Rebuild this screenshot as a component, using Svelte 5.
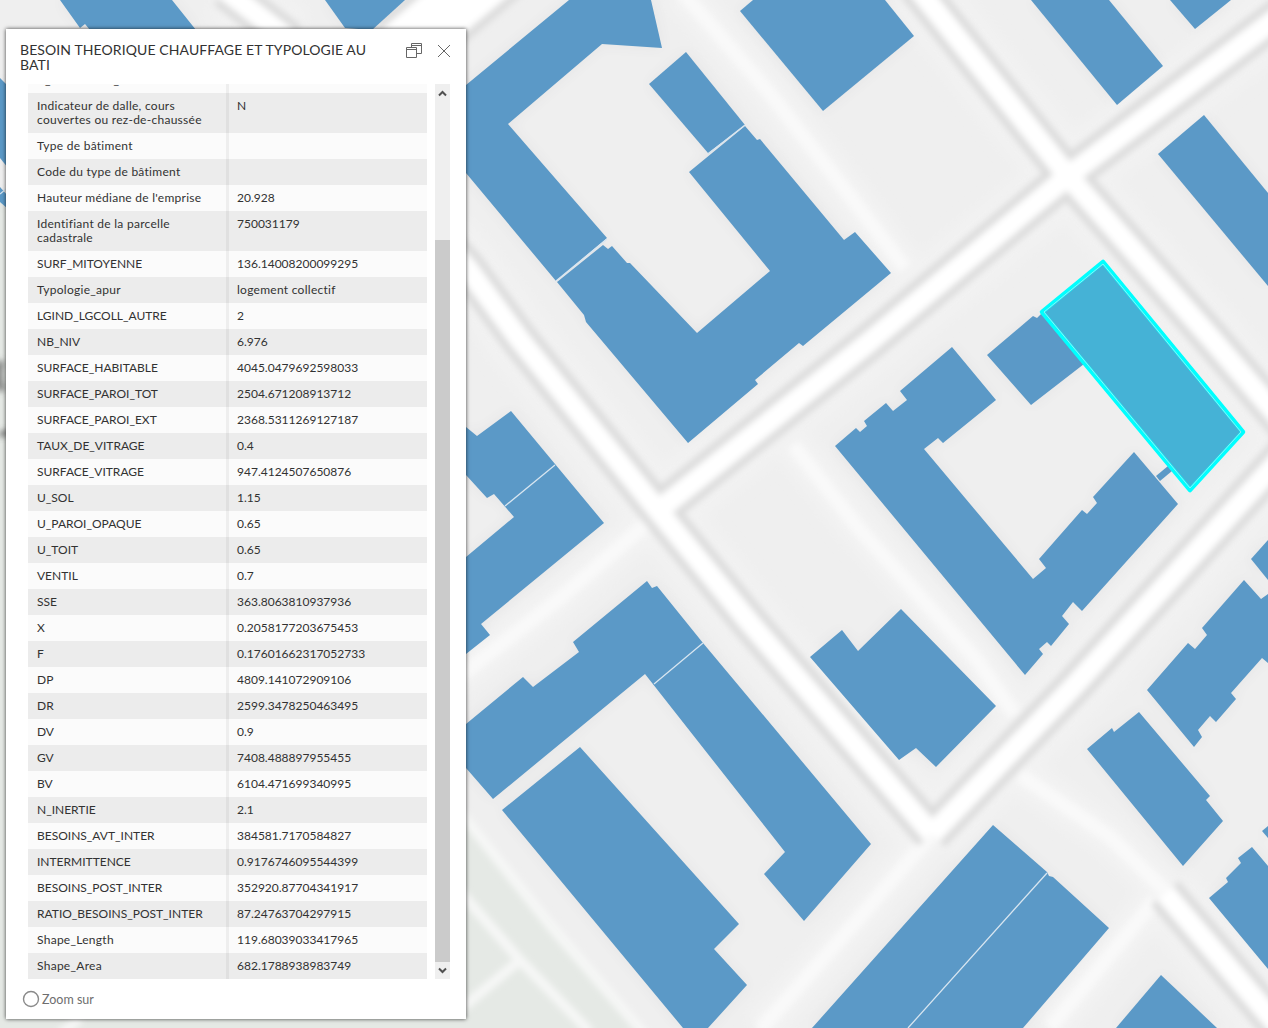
<script>
  const rows = [
    ['C_TOITDALLE_L', ''],
    ['Indicateur de dalle, cours couvertes ou rez-de-chaussée', 'N'],
    ['Type de bâtiment', ''],
    ['Code du type de bâtiment', ''],
    ["Hauteur médiane de l'emprise", '20.928'],
    ['Identifiant de la parcelle cadastrale', '750031179'],
    ['SURF_MITOYENNE', '136.14008200099295'],
    ['Typologie_apur', 'logement collectif'],
    ['LGIND_LGCOLL_AUTRE', '2'],
    ['NB_NIV', '6.976'],
    ['SURFACE_HABITABLE', '4045.0479692598033'],
    ['SURFACE_PAROI_TOT', '2504.671208913712'],
    ['SURFACE_PAROI_EXT', '2368.5311269127187'],
    ['TAUX_DE_VITRAGE', '0.4'],
    ['SURFACE_VITRAGE', '947.4124507650876'],
    ['U_SOL', '1.15'],
    ['U_PAROI_OPAQUE', '0.65'],
    ['U_TOIT', '0.65'],
    ['VENTIL', '0.7'],
    ['SSE', '363.8063810937936'],
    ['X', '0.2058177203675453'],
    ['F', '0.17601662317052733'],
    ['DP', '4809.141072909106'],
    ['DR', '2599.3478250463495'],
    ['DV', '0.9'],
    ['GV', '7408.488897955455'],
    ['BV', '6104.471699340995'],
    ['N_INERTIE', '2.1'],
    ['BESOINS_AVT_INTER', '384581.7170584827'],
    ['INTERMITTENCE', '0.9176746095544399'],
    ['BESOINS_POST_INTER', '352920.87704341917'],
    ['RATIO_BESOINS_POST_INTER', '87.24763704297915'],
    ['Shape_Length', '119.68039033417965'],
    ['Shape_Area', '682.1788938983749']
  ];

  // Mixed-case text is set slightly looser than codes and numbers.
  const isProse = (text) => /[a-z]{2}/.test(text);

  const roads = [
    'M915 -15 L1068 176 L1210 337 L1290 430',
    'M1290 8 L1068 176 L868 343 L660 509',
    'M440 238 L467 268 L520 340 L660 513 L750 623 L857 747 L932 834',
    'M932 834 L1073 687 L1290 448',
    'M1165 893 L1290 1040',
    'M225 -10 L290 40'
  ];

  const lanes = [
    'M1020 775 L1110 837 L1167 893',
    'M932 834 L860 917 L760 1030',
    'M660 512 L560 598 L450 684',
    'M793 445 L860 530 L977 660 L1015 715',
    'M680 -10 L767 90 L853 200 L905 268',
    'M1155 900 L1050 1028'
  ];

  const buildings = [
    '60,0 172,0 196,30 90,30 85,24 80,28',
    '325,0 405,0 372,30 345,28',
    '0,78 8,86 8,168 0,158',
    '0,187 8,196 8,209 0,202',
    '466,85 569,0 651,0 662,48 602,44 508,124 607,238 556,281 466,173',
    '686,52 745,125 708,153 649,84',
    '745,126 757,140 760,139 844,240 855,232 891,273 803,346 799,343 755,380 758,384 688,443 586,322 584,315 557,282 603,245 608,249 612,246 627,263 630,263 697,333 770,271 689,172',
    '740,11 753,0 885,0 914,36 823,111',
    '1031,0 1109,0 1163,66 1117,105',
    '1170,0 1231,0 1195,29',
    '1204,115 1268,193 1268,286 1158,154',
    '987,355 1033,316 1037,318 1042,313 1084,364 1031,405',
    '952,347 996,400 943,443 938,438 924,449 1033,579 1046,568 1039,559 1082,510 1087,514 1097,503 1093,497 1134,452 1178,504 1082,611 1073,602 1062,616 1069,624 1051,646 1047,642 1039,649 1043,654 1025,675 835,446 856,428 860,432 867,426 864,421 886,403 893,411 907,400 900,391',
    '1156,476 1168,466 1172,471 1160,481',
    '901,609 996,706 936,767 916,748 899,760 810,657 842,630 858,651',
    '466,427 477,436 511,411 604,523 481,624 490,635 466,654 466,557 514,517 494,494 487,498 466,475',
    '647,581 652,588 657,586 703,643 871,844 804,921 764,874 785,852 645,674 493,799 466,768 466,724 523,677 533,687 579,652 573,642',
    '580,747 739,924 714,949 747,985 708,1028 683,1028 502,810',
    '993,825 1047,872 1049,876 1053,877 1109,928 1023,1028 812,1028',
    '1161,975 1217,1028 1116,1028',
    '1139,712 1210,796 1206,800 1223,821 1183,866 1087,749 1112,728 1114,732',
    '1244,580 1261,599 1268,594 1268,663 1262,658 1231,693 1236,699 1216,722 1210,716 1198,730 1202,737 1194,747 1147,690 1188,643 1195,649 1207,635 1202,628',
    '1268,540 1251,559 1268,580',
    '1268,826 1262,831 1268,838',
    '1252,847 1268,866 1268,969 1209,898 1228,882 1226,878 1241,863 1238,858'
  ];

  const selected = '1103,262 1243,432 1190,490 1042,312';
</script>

<main>
  <svg class="map" viewBox="0 0 1268 1028" aria-hidden="true">
    <defs>
      <filter id="soft" filterUnits="userSpaceOnUse" x="-50" y="-50" width="1370" height="1130"><feGaussianBlur stdDeviation="3" /></filter>
      <filter id="haze" filterUnits="userSpaceOnUse" x="-50" y="-50" width="1370" height="1130"><feGaussianBlur stdDeviation="7" /></filter>
    </defs>
    <rect width="1268" height="1028" fill="#efefef" />
    <polygon class="park" points="0,200 466,822 640,1028 0,1028" />
    <g filter="url(#haze)" class="shade">
      {#each buildings as b}<polygon points={b} />{/each}
    </g>
    <g filter="url(#haze)">
      {#each roads as d}<path class="verge" {d} />{/each}
      {#each lanes as d}<path class="lane-glow" {d} />{/each}
    </g>
    <g filter="url(#soft)">
      <path class="path" d="M455 806 L550 925 L645 1035 M455 886 L520 960 L590 1032 M520 960 L462 1008 M60 1035 L80 1018" />
      {#each lanes as d}<path class="lane" {d} />{/each}
      {#each roads as d}<path class="casing" {d} />{/each}
      <path class="wide casing" d="M520 -50 L400 50" />
      {#each roads as d}<path class="road" {d} />{/each}
      <path class="wide road" d="M520 -50 L400 50" />
      <path class="mark" d="M1 361 Q-4 376 2 391 M0 435 L8 432" />
    </g>
    {#each buildings as b}<polygon class="building" points={b} />{/each}
    <path class="seam" d="M555 465 L505 506 M703 643 L654 684 M1047 873 L908 1028 M607 239 L556 281 M745 125 L708 154 M0 194 L6 189" />
    <polygon class="selection" points={selected} />
    <polygon class="hairline" points="1103,264 1241,432 1190,488 1044,312" />
  </svg>

  <section class="popup">
    <header>
      <h1>BESOIN THEORIQUE CHAUFFAGE ET TYPOLOGIE AU BATI</h1>
      <button aria-label="Agrandir">
        <svg width="18" height="16" viewBox="0 0 18 16">
          <path d="M5.5 4.5V.5H15.5V10.5H11M5.5 2.5H15.5M.5 4.5H10.5V14.5H.5ZM.5 6.5H10.5" />
        </svg>
      </button>
      <button aria-label="Fermer">
        <svg width="14" height="14" viewBox="0 0 14 14"><path d="M1 1L13 13M13 1L1 13" /></svg>
      </button>
    </header>

    <div class="content">
      <div class="table">
        {#each rows as [label, value]}
          <div class="row">
            <span class="label" class:prose={isProse(label)}>{label}</span>
            <span class="value" class:prose={isProse(value)}>{value}</span>
          </div>
        {/each}
      </div>
      <div class="scrollbar">
        <svg width="15" height="18" viewBox="0 0 15 18"><path d="M4 11.5L7.5 8L11 11.5" /></svg>
        <div class="track"><div class="thumb"></div></div>
        <svg width="15" height="17" viewBox="0 0 15 17"><path d="M4 6.5L7.5 10L11 6.5" /></svg>
      </div>
    </div>

    <footer>
      <svg width="18" height="18" viewBox="0 0 18 18"><circle cx="9" cy="9" r="7.5" /></svg>
      <span>Zoom sur</span>
    </footer>
  </section>
</main>

<style>
  :global(body) { overflow: hidden; }
  main {
    position: relative;
    box-sizing: border-box;
    width: 1268px;
    height: 1028px;
    padding: 29px 0 0 6px;
    overflow: hidden;
    font-family: Lato, sans-serif;
    color: #323232;
  }
  .map { position: absolute; inset: 0; width: 1268px; height: 1028px; }
  .map path { fill: none; }
  .park { fill: #e5e9e5; }
  .shade { opacity: 0.06; fill: #445; }
  .verge { stroke: #f2f2f2; stroke-width: 66; }
  .path { stroke: #f6f7f6; stroke-width: 10; }
  .lane-glow { stroke: #f3f3f3; stroke-width: 36; }
  .lane { stroke: #f9f9f9; stroke-width: 14; }
  .casing { stroke: #dcdcdc; stroke-width: 37; stroke-linejoin: round; }
  .road { stroke: #fff; stroke-width: 21; stroke-linejoin: round; }
  .wide.casing { stroke-width: 72; }
  .wide.road { stroke-width: 56; }
  .mark { stroke: #555; stroke-width: 5; }
  .building { fill: #5b99c7; }
  .seam { stroke: #d7e5f0; stroke-width: 1.3; }
  .selection { fill: #45b2d6; stroke: #0ff; stroke-width: 4.5; stroke-linejoin: round; }
  .hairline { fill: none; stroke: #b5e9f2; stroke-width: 0.8; }

  .popup {
    position: relative;
    display: flex;
    flex-direction: column;
    box-sizing: border-box;
    width: 460px;
    height: 990px;
    background: #fff;
    box-shadow: 0 0 4px rgba(0, 0, 0, 0.75);
  }
  header { display: flex; height: 55px; padding: 0 14px; box-sizing: border-box; }
  h1 {
    flex: none;
    width: 372px;
    margin: 13px 14px 0 0;
    font-size: 14px;
    font-weight: 400;
    line-height: 15px;
    letter-spacing: 0.1px;
  }
  button { flex: none; height: 16px; margin: 14px 0 0; padding: 0; border: 0; background: none; }
  button + button { margin: 14px 0 0 13px; }
  button svg { display: block; fill: none; stroke: #666; }
  .content { display: flex; gap: 8px; height: 895px; padding-left: 22px; }
  .table {
    display: flex;
    flex-direction: column;
    justify-content: flex-end;
    width: 399px;
    overflow: hidden;
    font-size: 12px;
    line-height: 14px;
  }
  .row { display: grid; flex: none; grid-template-columns: 201px 198px; min-height: 26px; background: #fbfbfb; }
  .row:nth-child(even) { background: #ececec; }
  .label { box-sizing: border-box; padding: 6px 20px 6px 9px; border-right: 3px solid rgba(0, 0, 0, 0.05); }
  .value { padding: 6px 8px; }
  .prose { letter-spacing: 0.27px; }
  .scrollbar { display: flex; flex-direction: column; width: 15px; background: #efefef; }
  .scrollbar svg { display: block; fill: none; stroke: #505050; stroke-width: 2; }
  .track { flex: 1; display: flex; align-items: flex-end; }
  .thumb { width: 15px; height: 722px; background: #cbcbcb; }
  footer { display: flex; align-items: center; gap: 2px; padding: 11px 0 0 16px; font-size: 12.5px; color: #6e6e6e; }
  footer svg { fill: none; stroke: #8a8a8a; stroke-width: 1.4; }
</style>
